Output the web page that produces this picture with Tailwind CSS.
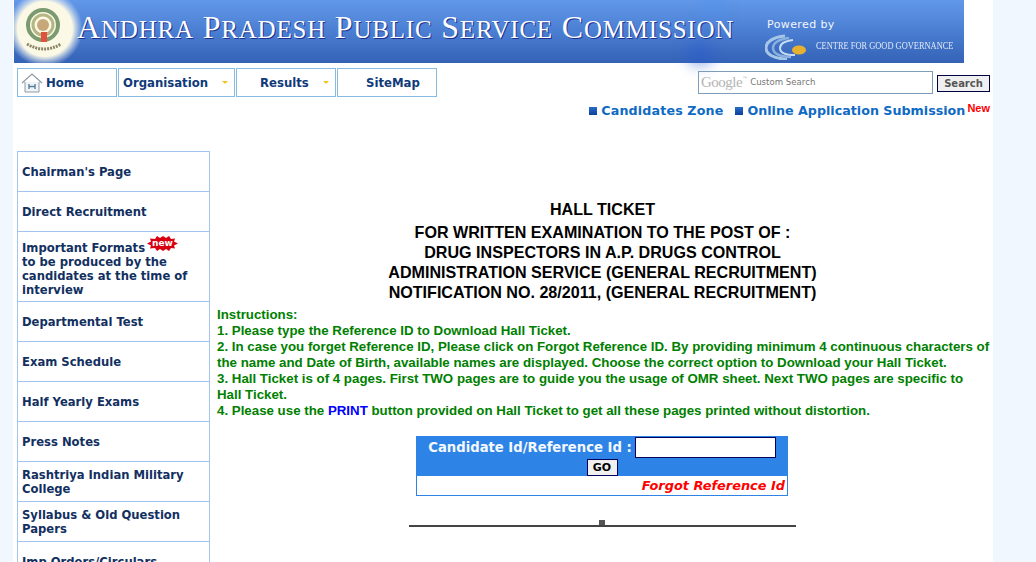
<!DOCTYPE html>
<html lang="en">
<head>
    <meta charset="UTF-8">
    <title>Hall Ticket</title>
    <script src="https://cdn.jsdelivr.net/npm/@tailwindcss/browser@4"></script>
</head>
<body class="h-[562px] overflow-hidden bg-[#f0f7ff] font-['Liberation_Sans',sans-serif]">
    <div class="ml-[13px] w-[980px] h-[562px] bg-white overflow-hidden">
        <!-- banner -->
        <div class="relative ml-px w-[950px] h-[63px] flex bg-gradient-to-b from-[#6298e8] via-[#4a7ed2] to-[#3462b6]">
            <span class="absolute left-[692px] -top-1 w-4 h-5 rounded-full bg-[#4c92ee]/70 blur-sm"></span>
            <span class="absolute left-[674px] top-[46px] w-6 h-[17px] rounded-full bg-[#2858d0]/70 blur-sm"></span>
            <div class="w-[62px] h-[63px] shrink-0 relative">
                <svg class="absolute left-0 top-0" width="76" height="63" viewBox="0 0 76 63">
                    <defs>
                        <radialGradient id="glow"><stop offset="0.72" stop-color="#fbf8e6"/><stop offset="1" stop-color="#dbe6f4" stop-opacity="0"/></radialGradient>
                    </defs>
                    <circle cx="31" cy="29" r="38" fill="url(#glow)"/>
                    <circle cx="29" cy="25" r="15" fill="none" stroke="#7c9a70" stroke-width="4"/>
                    <circle cx="29" cy="25" r="10" fill="none" stroke="#b4b684" stroke-width="3"/>
                    <circle cx="29" cy="25" r="6" fill="#c7a878"/>
                    <rect x="27" y="32" width="6" height="10" fill="#e0523c"/>
                    <path d="M13 44 Q30 54 47 44" fill="none" stroke="#8c8668" stroke-width="3" stroke-dasharray="2 1"/>
                </svg>
            </div>
            <div class="relative ml-px mt-[7px] h-[40px] w-[670px] shrink-0 font-['Liberation_Serif',serif] text-white text-[32px] leading-[40px] tracking-[0.8px] whitespace-nowrap [text-shadow:1px_1px_0_#1c2f8c]">A<span class="text-[25px] uppercase">ndhra</span> P<span class="text-[25px] uppercase">radesh</span> P<span class="text-[25px] uppercase">ublic</span> S<span class="text-[25px] uppercase">ervice</span> C<span class="text-[25px] uppercase">ommission</span></div>
            <div class="relative ml-[20px] pt-[18px] flex flex-col">
                <div class="text-[#f2f6fc] text-[11px] leading-[14px] tracking-[0.4px] font-['DejaVu_Sans',sans-serif]">Powered by</div>
                <div class="flex items-center mt-[2px] -ml-[2px]">
                    <svg width="48" height="26" viewBox="0 0 48 26" fill="none">
                        <path d="M20 2 C8 3 1 8 1 14 C1 20 9 25 22 25" stroke="#a6c6e8" stroke-width="3"/>
                        <path d="M24 4 C14 5 8 9 8 14 C8 19 14 23 26 23" stroke="#8ab0de" stroke-width="2.5"/>
                        <path d="M28 6 C19 7 15 10 15 14 C15 18 20 21 30 21" stroke="#c6dcf2" stroke-width="2"/>
                        <ellipse cx="34" cy="16" rx="7" ry="4.5" fill="#e8b030"/>
                    </svg>
                    <span class="ml-[3px] mb-[2px] w-[138px] text-[#dfe8f6] text-[10px] leading-none font-['Liberation_Serif',serif] whitespace-nowrap origin-left scale-x-[0.84]">CENTRE FOR GOOD GOVERNANCE</span>
                </div>
            </div>
        </div>

        <!-- nav row -->
        <div class="mt-[5px] h-[29px] flex relative font-['DejaVu_Sans',sans-serif] text-[11.7px] font-bold text-[#0f3a7a]">
            <div class="ml-1 w-[100px] border border-[#86bce4] flex items-center">
                <svg class="ml-[3px]" width="22" height="22" viewBox="0 0 22 22" fill="none">
                    <path d="M1 11 L11 2 L21 11" stroke="#8d9aa6" stroke-width="1.2"/>
                    <path d="M4 10 V20 H18 V10" fill="#eef4f8" stroke="#8d9aa6"/>
                    <path d="M8 12 V17 M14 12 V17 M8 14.5 H14" stroke="#5b7f96" stroke-width="1.4"/>
                </svg>
                <span class="ml-[3px] pt-[2px]">Home</span>
            </div>
            <div class="ml-px w-[117px] border border-[#86bce4] flex items-center pl-1">
                <span class="pt-[2px]">Organisation</span>
                <span class="ml-[14px] mb-[1px] w-0 h-0 border-x-[3px] border-t-[3px] border-x-transparent border-t-[#f5c518]"></span>
            </div>
            <div class="ml-px w-[100px] border border-[#86bce4] flex items-center pl-[23px]">
                <span class="pt-[2px]">Results</span>
                <span class="ml-[14px] mb-[1px] w-0 h-0 border-x-[3px] border-t-[3px] border-x-transparent border-t-[#f5c518]"></span>
            </div>
            <div class="ml-px w-[100px] border border-[#86bce4] flex items-center pl-[28px]"><span class="pt-[2px]">SiteMap</span></div>
            <!-- search -->
            <div class="ml-[261px] mt-[3px] w-[235px] h-[23px] border border-[#7e9db9] flex items-center pl-[2px] font-normal">
                <span class="font-['Liberation_Serif',serif] text-[15px] text-[#b4b4b4] tracking-[-0.5px]">Google</span>
                <span class="text-[6px] -mt-2 text-[#a8a8a8]">™</span>
                <span class="ml-[2px] text-[8.6px] text-[#777]">Custom Search</span>
            </div>
            <div class="ml-[4px] mt-[7px] w-[53px] h-[17px] border border-[#000046] bg-[#f0f0f0] text-[10px] text-[#555] flex items-center justify-center">Search</div>
        </div>

        <!-- quick links -->
        <div class="h-[27px] flex justify-end items-center pr-[3px] font-['DejaVu_Sans',sans-serif] font-bold text-[12.7px] text-[#0f6ac4]">
            <span class="w-2 h-2 bg-gradient-to-b from-[#2a6cc8] to-[#0e3f9c]"></span>
            <span class="ml-[4px] tracking-[0.13px]">Candidates Zone</span>
            <span class="ml-3 w-2 h-2 bg-gradient-to-b from-[#2a6cc8] to-[#0e3f9c]"></span>
            <span class="ml-[4px]">Online Application Submission</span>
            <span class="ml-[2px] mb-[5px] text-[11px] text-[#ff0000] font-['Liberation_Sans',sans-serif]">New</span>
        </div>

        <div class="mt-[27px] flex">
            <!-- sidebar -->
            <div class="ml-1 w-[193px] shrink-0 font-['DejaVu_Sans',sans-serif] text-[11.6px] font-bold leading-[14px] text-[#12305f]">
                <div class="h-[41px] border border-[#a4c4f0] flex items-center pl-1">Chairman's Page</div>
                <div class="h-[41px] -mt-px border border-[#a4c4f0] flex items-center pl-1">Direct Recruitment</div>
                <div class="h-[71px] -mt-px border border-[#a4c4f0] pl-1 pt-[9px]">
                    <div class="flex relative">Important Formats
                        <span class="absolute left-[125px] -top-[5px] w-[31px] h-[15px] flex items-center justify-center">
                            <svg class="absolute inset-0" width="31" height="15" viewBox="0 0 31 15">
                                <polygon fill="#d80010" points="0,7.5 4,5.5 3,2.5 8,3 10,0 13,2 16,0 19,2 22,0 24,3 28,2.5 27,5.5 31,7.5 27,9.5 28,12.5 24,12 22,15 19,13 16,15 13,13 10,15 8,12 3,12.5 4,9.5"/>
                            </svg>
                            <span class="relative text-white text-[9px] leading-none">new</span>
                        </span>
                    </div>
                    to be produced by the candidates at the time of interview
                </div>
                <div class="h-[41px] -mt-px border border-[#a4c4f0] flex items-center pl-1">Departmental Test</div>
                <div class="h-[41px] -mt-px border border-[#a4c4f0] flex items-center pl-1">Exam Schedule</div>
                <div class="h-[41px] -mt-px border border-[#a4c4f0] flex items-center pl-1">Half Yearly Exams</div>
                <div class="h-[41px] -mt-px border border-[#a4c4f0] flex items-center pl-1">Press Notes</div>
                <div class="h-[41px] -mt-px border border-[#a4c4f0] flex items-center pl-1">Rashtriya Indian Military College</div>
                <div class="h-[41px] -mt-px border border-[#a4c4f0] flex items-center pl-1">Syllabus &amp; Old Question Papers</div>
                <div class="h-[41px] -mt-px border border-[#a4c4f0] flex items-center pl-1">Imp Orders/Circulars</div>
            </div>

            <!-- main -->
            <div class="ml-[7px] w-[773px]">
                <div class="pt-[48px] w-[771px] text-center text-[16.1px] font-bold leading-[20px] text-black">
                    <div class="mb-[3px]">HALL TICKET</div>
                    <div>FOR WRITTEN EXAMINATION TO THE POST OF :</div>
                    <div>DRUG INSPECTORS IN A.P. DRUGS CONTROL</div>
                    <div>ADMINISTRATION SERVICE (GENERAL RECRUITMENT)</div>
                    <div>NOTIFICATION NO. 28/2011, (GENERAL RECRUITMENT)</div>
                </div>
                <div class="mt-[5px] text-[13.3px] font-bold leading-[16px] text-[#008000] whitespace-nowrap">
                    Instructions:<br>
                    1. Please type the Reference ID to Download Hall Ticket.<br>
                    2. In case you forget Reference ID, Please click on Forgot Reference ID. By providing minimum 4 continuous characters of<br>
                    the name and Date of Birth, available names are displayed. Choose the correct option to Download your Hall Ticket.<br>
                    3. Hall Ticket is of 4 pages. First TWO pages are to guide you the usage of OMR sheet. Next TWO pages are specific to<br>
                    Hall Ticket.<br>
                    4. Please use the <span class="text-[#0000ff]">PRINT</span> button provided on Hall Ticket to get all these pages printed without distortion.
                </div>
                <div class="mt-[17px] ml-[199px] w-[372px] h-[60px] border border-[#2e84e6] font-['DejaVu_Sans',sans-serif] font-bold">
                    <div class="h-[39px] bg-[#2e84e6] flex flex-col items-center">
                        <div class="h-[21px] flex items-center">
                            <span class="text-[13.2px] text-[#f4f8ff]">Candidate Id/Reference Id :</span>
                            <span class="ml-[3px] w-[141px] h-[21px] bg-white border border-[#000060]"></span>
                        </div>
                        <div class="mt-[1px] w-[31px] h-[17px] bg-[#f0f0f0] border border-[#000060] text-[11px] leading-[15px] text-center text-black">GO</div>
                    </div>
                    <div class="h-[19px] text-right italic text-[12.9px] leading-[19px] text-[#ff0000] pr-[2px]">Forgot Reference Id</div>
                </div>
                <div class="mt-[29px] ml-[192px] w-[387px] relative h-[2px] bg-[#444]">
                    <span class="absolute left-[190px] -top-[5px] w-[6px] h-[5px] bg-[#555]"></span>
                </div>
            </div>
        </div>
    </div>
</body>
</html>
